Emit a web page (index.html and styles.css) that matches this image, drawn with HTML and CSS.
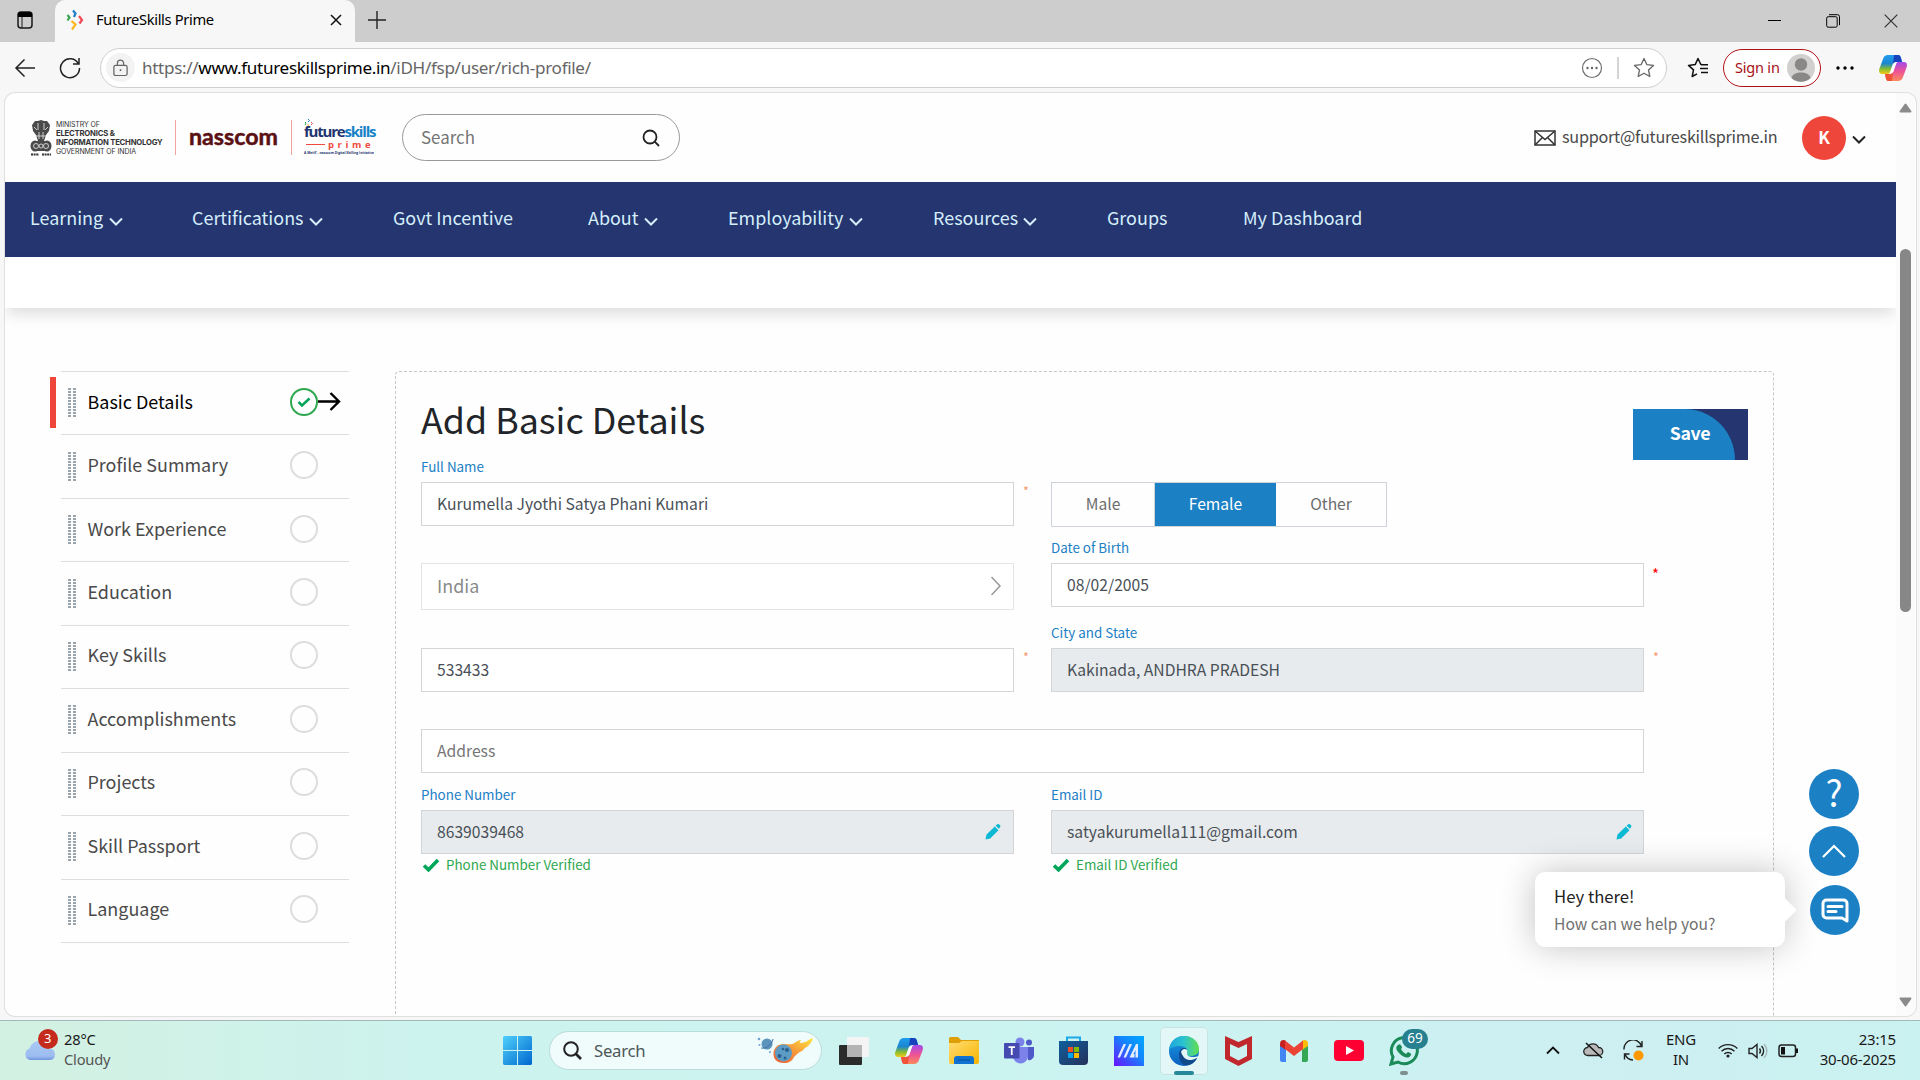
FILE: index.html
```html
<!DOCTYPE html>
<html lang="en">
<head>
<meta charset="utf-8">
<title>FutureSkills Prime</title>
<link rel="stylesheet" href="styles.css">
</head>
<body>
<svg class="defs" width="0" height="0">
  <defs>
    <linearGradient id="cpA" x1="0" y1="0" x2="0" y2="1"><stop offset="0" stop-color="#1f9df0"/><stop offset=".45" stop-color="#1b86cf"/><stop offset=".75" stop-color="#8bbf2b"/><stop offset="1" stop-color="#f4c81c"/></linearGradient>
    <linearGradient id="cpB" x1="0" y1="0" x2="0" y2="1"><stop offset="0" stop-color="#a34bea"/><stop offset=".5" stop-color="#ee5396"/><stop offset="1" stop-color="#fb8a5c"/></linearGradient>
    <linearGradient id="win" x1="0" y1="0" x2="1" y2="1"><stop offset="0" stop-color="#4fd0fb"/><stop offset="1" stop-color="#0067cf"/></linearGradient>
    <linearGradient id="fire" x1="0" y1="1" x2="1" y2="0"><stop offset="0" stop-color="#ee5a2e"/><stop offset=".5" stop-color="#f7983a"/><stop offset="1" stop-color="#fde63c"/></linearGradient>
    <linearGradient id="fold" x1="0" y1="0" x2="1" y2="1"><stop offset="0" stop-color="#ffdd73"/><stop offset="1" stop-color="#f8b400"/></linearGradient>
    <linearGradient id="store" x1="0" y1="0" x2="1" y2="1"><stop offset="0" stop-color="#0f5f9e"/><stop offset="1" stop-color="#25325b"/></linearGradient>
    <linearGradient id="asus" x1="0" y1="1" x2="1" y2="0"><stop offset="0" stop-color="#6a11ff"/><stop offset=".6" stop-color="#1188ff"/><stop offset="1" stop-color="#00a8ff"/></linearGradient>
    <linearGradient id="edA" x1="0" y1="0" x2="1" y2="0"><stop offset="0" stop-color="#1ea6dc"/><stop offset=".5" stop-color="#2cc3cf"/><stop offset="1" stop-color="#62e04d"/></linearGradient>
    <linearGradient id="edB" x1="0" y1="0" x2="0" y2="1"><stop offset="0" stop-color="#1c9de0"/><stop offset="1" stop-color="#0a5fc0"/></linearGradient>
    <linearGradient id="cloud" x1="0" y1="0" x2="0" y2="1"><stop offset="0" stop-color="#a9c9f5"/><stop offset=".8" stop-color="#9dbcf0"/><stop offset="1" stop-color="#6e95e0"/></linearGradient>
    <symbol id="chev" viewBox="0 0 14 9"><path d="M1 1.500l6 6 6-6" fill="none" stroke="currentColor" stroke-width="2"/></symbol>
    <symbol id="copilot" viewBox="0 0 28 26">
      <path d="M9 0h10c2 0 2.600 1.500 3 3l1 4h-6c-2 0-3 1-3.500 3L11 17c-.5 1.500-1.500 2-3 2H3c-2.500 0-3.500-2-2.700-5L4 4c.8-2.500 2.500-4 5-4z" fill="url(#cpA)"/>
      <path d="M15 0h4c2 0 2.600 1.500 3 3l1 4h-6c-1.500 0-2.500.5-3 2z" fill="#1744bd"/>
      <path d="M19 26H9.500c-2 0-2.300-1.500-2.700-3L6 19h5c2 0 3-1 3.500-3L17 9c.5-1.500 1.500-2 3-2h5c2.500 0 3.500 2 2.700 5L24 22c-.8 2.500-2.500 4-5 4z" fill="url(#cpB)"/>
      <path d="M13 26H9.500c-2 0-2.300-1.500-2.700-3L6 19h5c1.500 0 2.500-.5 3-2z" fill="#ef5338"/>
      <path d="M17.500 8.500h-2c-.8 0-1.300.5-1.600 1.500L11.200 17.500h1.500c1 0 1.500-.5 1.800-1.500l2-6z" fill="#fff"/>
    </symbol>
    <symbol id="tick" viewBox="0 0 18 14"><path d="M2 7.500l4.500 4.300L16 2" fill="none" stroke="#00a65a" stroke-width="3.600"/></symbol>
    <symbol id="pencil" viewBox="0 0 16 16"><path d="M0.500 15.500l1-5L9.800 2.600l3.700 3.700-8.300 8.200zM10.600 1.800l1-1c1-1 2.300-.8 3 0 1 .9 1.100 2 .1 3l-.8.900z" fill="#0cb9d4"/></symbol>
    <symbol id="grip" viewBox="0 0 8 29"><path d="M1.500 0v29M6.500 0v29" stroke="#9aa4ad" stroke-width="3" stroke-dasharray="2 1" fill="none"/></symbol>
  </defs>
</svg>

<div class="tabstrip">
  <div class="workspaces"><svg width="16" height="18" viewBox="0 0 16 18"><rect x="1" y="1" width="14" height="16" rx="3" fill="none" stroke="#1a1a1a" stroke-width="1.500"/><path d="M1 6V4a3 3 0 0 1 3-3h8a3 3 0 0 1 3 3v2z" fill="#000"/><path d="M5 6v11" stroke="#1a1a1a"/></svg></div>
  <div class="tab">
    <svg class="favicon" width="18" height="22" viewBox="0 0 18 22" fill="none" stroke-width="2.200"><path d="M7 1.500l2.500 3L8 8" stroke="#1c7fc6"/><path d="M1.500 6l2 2.500-2 3" stroke="#3aa655"/><path d="M13 7l3 4-2.500 3.500" stroke="#ef4a56"/><path d="M5.500 12l4 3.500-3.500 5" stroke="#fbb71b"/></svg>
    <span class="tab-title">FutureSkills Prime</span>
    <svg class="tab-close" width="12" height="12" viewBox="0 0 12 12"><path d="M1 1l10 10M11 1L1 11" stroke="#111" stroke-width="1.500"/></svg>
  </div>
  <svg class="newtab" width="18" height="18" viewBox="0 0 18 18"><path d="M9 0v18M0 9h18" stroke="#222" stroke-width="1.400"/></svg>
  <div class="winctl">
    <svg width="14" height="14" viewBox="0 0 14 14"><path d="M0 6.500h13" stroke="#000"/></svg>
    <svg width="14" height="14" viewBox="0 0 14 14" fill="none" stroke="#000"><rect x=".7" y="2.700" width="10.500" height="10.500" rx="1.500"/><path d="M3 .7h8.500a2 2 0 0 1 2 2v8.500"/></svg>
    <svg width="14" height="14" viewBox="0 0 14 14"><path d="M.7.7l12.600 12.600M13.300.7L.7 13.300" stroke="#333" stroke-width="1.200"/></svg>
  </div>
</div>

<div class="toolbar">
  <svg class="back" width="22" height="20" viewBox="0 0 22 20" fill="none" stroke="#222" stroke-width="1.500"><path d="M21 10H2M10.500 1.500L2 10l8.500 8.500"/></svg>
  <svg class="reload" width="22" height="22" viewBox="0 0 22 22" fill="none" stroke="#222" stroke-width="1.500"><path d="M19.500 7A9.500 9.500 0 1 0 20.500 11M20 1v6h-6"/></svg>
  <div class="address">
    <span class="lock"><svg width="15" height="18" viewBox="0 0 17 19" fill="none" stroke="#666" stroke-width="1.400"><rect x="1" y="6.500" width="15" height="11.500" rx="2"/><path d="M5 6.500V4a3.500 3.500 0 0 1 7 0v2.500"/><circle cx="8.500" cy="12" r="1" fill="#555" stroke="none"/></svg></span>
    <span class="url">https://<b>www.futureskillsprime.in</b>/iDH/fsp/user/rich-profile/</span>
    <svg class="more-circle" width="22" height="22" viewBox="0 0 22 22"><circle cx="11" cy="11" r="9.500" fill="none" stroke="#707070" stroke-width="1.200"/><g fill="#666"><circle cx="6.500" cy="11" r="1.200"/><circle cx="11" cy="11" r="1.200"/><circle cx="15.500" cy="11" r="1.200"/></g></svg>
    <i class="vsep"></i>
    <svg width="22" height="22" viewBox="0 0 22 22" fill="none" stroke="#666" stroke-width="1.300" stroke-linejoin="round"><path d="M11 1.500l2.800 6.100 6.700.8-5 4.500 1.300 6.600-5.800-3.300-5.800 3.300 1.300-6.600-5-4.500 6.700-.8z"/></svg>
  </div>
  <svg class="favs" width="22" height="22" viewBox="0 0 22 22" fill="none" stroke="#111" stroke-width="1.500" stroke-linejoin="round"><path d="M15 7.700l-1.300-.4L11 1.500 8.200 7.600l-6.700.8 5 4.500-1.300 6.600L10 16.800M13 11.500h8M14 15.500h7M14 7.700h7"/></svg>
  <div class="signin"><span>Sign in</span><svg width="28" height="28" viewBox="0 0 28 28"><circle cx="14" cy="14" r="14" fill="#d2d0ce"/><circle cx="14" cy="10.500" r="6.200" fill="#8a8886"/><path d="M4.500 24c1-4 5-5.500 9.500-5.500s8.500 1.500 9.500 5.500c-5.500 5-13.500 5-19 0z" fill="#8a8886"/></svg></div>
  <svg class="dots" width="18" height="4" viewBox="0 0 18 4"><circle cx="2" cy="2" r="1.700"/><circle cx="9" cy="2" r="1.700"/><circle cx="16" cy="2" r="1.700"/></svg>
  <svg class="cop" width="28" height="26"><use href="#copilot"/></svg>
</div>

<div class="viewport">
  <div class="page">
    <header class="site-head">
      <svg class="emblem" width="22" height="36" viewBox="0 0 22 36"><g fill="#4a4a4a"><path d="M5 1h3l3-1 3 1h3l3 4-1 6-3 4-2 6H8l-2-6-3-4-1-6z"/><ellipse cx="5" cy="26" rx="4.500" ry="5.500"/><ellipse cx="17" cy="26" rx="4.500" ry="5.500"/><rect x="3" y="21" width="16" height="10" rx="2"/></g><g fill="none" stroke="#ddd" stroke-width=".9"><path d="M8 3v7M14 3v7M4 7l3 3M18 7l-3 3M9 12v7M13 12v7M6 16h10"/><circle cx="6" cy="26" r="2.500"/><circle cx="16" cy="26" r="2.500"/><circle cx="11" cy="26" r="2"/></g><path d="M1 34.500h8M12 34.500h9" stroke="#333" stroke-width="2" stroke-dasharray="2 .6"/></svg>
      <div class="ministry"><span>MINISTRY OF</span><b>ELECTRONICS &amp;</b><b>INFORMATION TECHNOLOGY</b><span>GOVERNMENT OF INDIA</span></div>
      <i class="hr1"></i>
      <div class="nasscom">nasscom</div>
      <i class="hr2"></i>
      <div class="fsp">
        <svg width="10" height="8" viewBox="0 0 10 8" fill="none"><path d="M4 0l1.500 1.500L4 3" stroke="#1c7fc6"/><path d="M1 3l1 1-1 2" stroke="#3aa655"/><path d="M7 3l1.500 1.500L7 6" stroke="#ef4a56"/><path d="M3.500 5l1 1-1 2" stroke="#fbb71b"/></svg>
        <div class="fsp-a">future<em>skills</em></div>
        <div class="fsp-b"><i></i>prime</div>
        <div class="fsp-c">A MeitY - nasscom Digital Skilling Initiative</div>
      </div>
      <div class="site-search"><span>Search</span><svg width="18" height="18" viewBox="0 0 18 18" fill="none" stroke="#222" stroke-width="1.800"><circle cx="8" cy="8" r="6.500"/><path d="M12.700 12.700L17 17"/></svg></div>
      <svg class="mail" width="22" height="16" viewBox="0 0 22 16" fill="none" stroke="#333" stroke-width="1.500"><rect x="1" y="1" width="20" height="14"/><path d="M1 1l10 8.500L21 1M1 15l7.500-7.500M21 15l-7.500-7.500"/></svg>
      <span class="support">support@futureskillsprime.in</span>
      <span class="avatar">K</span>
      <svg class="achev" width="14" height="9"><use href="#chev"/></svg>
    </header>
    <nav class="nav">
      <a class="n1">Learning<svg width="14" height="9"><use href="#chev"/></svg></a>
      <a class="n2">Certifications<svg width="14" height="9"><use href="#chev"/></svg></a>
      <a class="n3">Govt Incentive</a>
      <a class="n4">About<svg width="14" height="9"><use href="#chev"/></svg></a>
      <a class="n5">Employability<svg width="14" height="9"><use href="#chev"/></svg></a>
      <a class="n6">Resources<svg width="14" height="9"><use href="#chev"/></svg></a>
      <a class="n7">Groups</a>
      <a class="n8">My Dashboard</a>
    </nav>
    <div class="strip"></div>
    <main class="main">
      <ul class="side">
        <li class="active"><svg class="grip" width="8" height="29"><use href="#grip"/></svg><span>Basic Details</span><svg class="done" width="51" height="28" viewBox="0 0 51 28" fill="none"><circle cx="14" cy="14" r="13" stroke="#2fa84f" stroke-width="2"/><path d="M8.500 14l3.500 3.500 7.500-7" stroke="#00a65a" stroke-width="2.500"/><path d="M28 13.500h20M40.500 5l8.500 8.500-8.500 8.500" stroke="#000" stroke-width="2.400"/></svg></li>
        <li><svg class="grip" width="8" height="29"><use href="#grip"/></svg><span>Profile Summary</span><i></i></li>
        <li><svg class="grip" width="8" height="29"><use href="#grip"/></svg><span>Work Experience</span><i></i></li>
        <li><svg class="grip" width="8" height="29"><use href="#grip"/></svg><span>Education</span><i></i></li>
        <li><svg class="grip" width="8" height="29"><use href="#grip"/></svg><span>Key Skills</span><i></i></li>
        <li><svg class="grip" width="8" height="29"><use href="#grip"/></svg><span>Accomplishments</span><i></i></li>
        <li><svg class="grip" width="8" height="29"><use href="#grip"/></svg><span>Projects</span><i></i></li>
        <li><svg class="grip" width="8" height="29"><use href="#grip"/></svg><span>Skill Passport</span><i></i></li>
        <li><svg class="grip" width="8" height="29"><use href="#grip"/></svg><span>Language</span><i></i></li>
      </ul>
      <section class="panel">
        <div class="panel-head"><h1>Add Basic Details</h1><button class="save"><span>Save</span></button></div>
        <div class="row r1">
          <div class="field"><label>Full Name</label><div class="box">Kurumella Jyothi Satya Phani Kumari</div><sup>*</sup></div>
          <div class="field"><label></label><div class="seg"><span class="male">Male</span><span class="female">Female</span><span class="other">Other</span></div></div>
        </div>
        <div class="row r2">
          <div class="field"><label></label><div class="box country">India<svg width="12" height="20" viewBox="0 0 12 20"><path d="M1.500 1l8.500 9-8.500 9" fill="none" stroke="#999" stroke-width="1.500"/></svg></div></div>
          <div class="field"><label>Date of Birth</label><div class="box">08/02/2005</div><sup class="red">*</sup></div>
        </div>
        <div class="row r3">
          <div class="field"><label></label><div class="box">533433</div><sup>*</sup></div>
          <div class="field"><label>City and State</label><div class="box off">Kakinada, ANDHRA PRADESH</div><sup>*</sup></div>
        </div>
        <div class="row r4"><div class="field wide"><label></label><div class="box ph">Address</div></div></div>
        <div class="row r5">
          <div class="field"><label>Phone Number</label><div class="box off">8639039468<svg width="16" height="16"><use href="#pencil"/></svg></div><div class="ok"><svg width="18" height="14"><use href="#tick"/></svg>Phone Number Verified</div></div>
          <div class="field"><label>Email ID</label><div class="box off mailbox">satyakurumella111@gmail.com<svg width="16" height="16"><use href="#pencil"/></svg></div><div class="ok"><svg width="18" height="14"><use href="#tick"/></svg>Email ID Verified</div></div>
        </div>
      </section>
    </main>
  </div>
  <div class="scroll">
    <svg width="13" height="10" viewBox="0 0 13 10"><path d="M6.500 1.500L11.500 8.500h-10z" fill="#8b8b8b" stroke="#8b8b8b" stroke-width="2" stroke-linejoin="round"/></svg>
    <div class="thumb"></div>
    <svg class="down" width="13" height="10" viewBox="0 0 13 10"><path d="M6.500 8.500L11.500 1.500h-10z" fill="#8b8b8b" stroke="#8b8b8b" stroke-width="2" stroke-linejoin="round"/></svg>
  </div>
  <div class="chat"><strong>Hey there!</strong><span>How can we help you?</span></div>
  <div class="fabs">
    <span class="fab help">?</span>
    <span class="fab"><svg width="24" height="14" viewBox="0 0 24 14"><path d="M1 13L12 2l11 11" fill="none" stroke="#fff" stroke-width="2.200"/></svg></span>
    <span class="fab talk"><svg width="28" height="25" viewBox="0 0 28 25" fill="none" stroke="#fff" stroke-width="3" stroke-linejoin="round" stroke-linecap="round"><path d="M5.500 2h17A3.500 3.500 0 0 1 26 5.500V23l-5-3H5.500A3.500 3.500 0 0 1 2 16.500v-11A3.500 3.500 0 0 1 5.500 2z"/><path d="M7 8.500h14M7 13.500h8"/></svg></span>
  </div>
</div>

<footer class="taskbar">
  <div class="weather">
    <svg width="34" height="36" viewBox="0 0 34 36"><path d="M6 31a6 6 0 0 1-.5-11.500Q8 12 15 12c6 0 8 4 8.500 7.500Q31 19 31 25.500 31 31 25 31z" fill="url(#cloud)"/><circle cx="24" cy="10" r="10" fill="#c42b1c"/></svg>
    <b>3</b>
    <div><span>28°C</span><span class="dim">Cloudy</span></div>
  </div>
  <svg class="start" width="29" height="29" viewBox="0 0 29 29"><path d="M1 0h13v14H0V1zM15 0h13l1 1v13H15zM0 15h14v14H1l-1-1zM15 15h14v13l-1 1H15z" fill="url(#win)"/></svg>
  <div class="tsearch">
    <svg width="19" height="19" viewBox="0 0 19 19" fill="none" stroke="#222" stroke-width="2"><circle cx="8" cy="8" r="6.800"/><path d="M13 13l5 5" stroke-width="2.600"/></svg>
    <span>Search</span>
    <svg class="comet" width="57" height="27" viewBox="0 0 57 27"><circle cx="10" cy="7" r="5.500" fill="#5c93bd"/><path d="M4 11c5 1 11-3 12-9" stroke="#3f76a5" fill="none"/><circle cx="2" cy="2" r="1.300" fill="#6aa5d0"/><circle cx="2.500" cy="8" r="1" fill="#6aa5d0"/><circle cx="13" cy="15" r="1" fill="#6aa5d0"/><path d="M16.500 17c0-6 4-10 10-10 5 0 7 1 10-.5S41 3 44 3c-1 2-2 3 0 3 5 0 8-4 12-5-1 4-4 8-8 10l-3 3c-3 1-5 3-8 6-2 4-5 6-10 6-6 0-10.500-3-10.500-9z" fill="url(#fire)"/><circle cx="26.500" cy="16" r="8.500" fill="#5c9cc4"/><circle cx="30" cy="13" r="2" fill="#2c5f8d"/><circle cx="22.500" cy="19" r="2" fill="#2c5f8d"/><circle cx="28" cy="21" r="1.500" fill="#2c5f8d"/><circle cx="26" cy="12" r="1.300" fill="#2c5f8d"/></svg>
  </div>
  <svg class="a0" width="30" height="28" viewBox="0 0 30 28"><rect y="8" width="23" height="20" rx="1" fill="#2b2b2b"/><rect x="8" y="0" width="22" height="20" rx="1" fill="#f4f4f4"/><rect x="8" y="8" width="15" height="12" fill="#b4b4b4"/></svg>
  <svg class="a1" width="28" height="26"><use href="#copilot"/></svg>
  <svg class="a2" width="30" height="27" viewBox="0 0 30 27"><path d="M0 1.500Q0 0 1.500 0H9l3 3h18v8H0z" fill="#dd9e06"/><path d="M0 6h10l3-2h17v21q0 2-2 2H2q-2 0-2-2z" fill="url(#fold)"/><path d="M5 27v-5q0-3 3-3h14q3 0 3 3v5z" fill="#0f72d0"/><path d="M9 23h12" stroke="#0b4f98"/></svg>
  <svg class="a3" width="30" height="27" viewBox="0 0 30 27"><circle cx="16" cy="5" r="4.500" fill="#7b83eb"/><circle cx="25" cy="5.500" r="3" fill="#5059c9"/><path d="M22 10h8v9a5 5 0 0 1-6 4z" fill="#5059c9"/><path d="M9 10h15v9a7.500 7.500 0 0 1-15 0z" fill="#7b83eb"/><rect y="6" width="15.500" height="15.500" rx="1" fill="#444ab0"/><path d="M4.500 10.200h6.500M7.750 10v8" stroke="#fff" stroke-width="1.800"/></svg>
  <svg class="a4" width="29" height="30" viewBox="0 0 29 30"><path d="M8 7V1.500h13V7" fill="none" stroke="#1ba9e8" stroke-width="2"/><path d="M0 5h29v20q0 4-4 4H4q-4 0-4-4z" fill="url(#store)"/><path d="M9 11h5v5H9z" fill="#f25022"/><path d="M15 11h5v5h-5z" fill="#7fba00"/><path d="M9 17h5v5H9z" fill="#00a4ef"/><path d="M15 17h5v5h-5z" fill="#ffb900"/></svg>
  <svg class="a5" width="30" height="30" viewBox="0 0 30 30"><path d="M0 0h30v30H0z" fill="url(#asus)"/><g fill="#e4edff"><path d="M3.500 21.500L9.500 8h2.500l-6 13.500z"/><path d="M9.500 21.500l6-13.500H18l-6 13.500z"/><path d="M15.500 21.500L22 8h2v13.500h-2.500V14l-2 4h1v3.500z"/></g></svg>
  <div class="edge"><svg width="30" height="30" viewBox="0 0 30 30"><circle cx="15" cy="15" r="15" fill="url(#edB)"/><path d="M0 14C1 5 7 0 15 0c9 0 15 6 15 13 0 5-4 7-8 7-3 0-5-1-4-3 1-5-3-7-7-7C6 10 1 12 0 14z" fill="url(#edA)"/><path d="M10 19c0-4 2-7 5-7 2 0 4 2 3 5-1 4 2 6 6 6 2 0 3-1 4-1-3 6-8 8-12 7-4-1-6-5-6-10z" fill="#114a8b"/><path d="M12 16c1-3 4-4 6-2 1 1 0 3 0 4 1 3 5 4 12 2v2h-2c-4 2-8 3-11 1-2-1-4-4-5-7z" fill="#e4f7f7"/></svg></div>
  <svg class="a6" width="27" height="30" viewBox="0 0 27 30"><path d="M0 0l13.500 6L27 0v23l-13.500 7L0 23zM5 8v12l8.500 4.500L22 20V8l-8.500 4z" fill="#c0282d" fill-rule="evenodd"/></svg>
  <svg class="a7" width="28" height="22" viewBox="0 0 28 22"><path d="M0 3v17q0 2 2 2h4V8z" fill="#4285f4"/><path d="M28 3v17q0 2-2 2h-4V8z" fill="#34a853"/><path d="M0 4Q0 0 3.500 0 5 0 6 1v9L0 6z" fill="#c5221f"/><path d="M28 4q0-4-3.500-4Q23 0 22 1v9l6-4z" fill="#fbbc04"/><path d="M5 .5l9 7 9-7V9l-9 7-9-7z" fill="#ea4335"/></svg>
  <svg class="a8" width="30" height="21" viewBox="0 0 30 21"><rect width="30" height="21" rx="4" fill="#ff0033"/><path d="M12 6l8 4.500-8 4.500z" fill="#fff"/></svg>
  <div class="wa"><svg width="30" height="30" viewBox="0 0 30 30" fill="none"><path d="M2 28l2-7a13 13 0 1 1 5 5z" stroke="#1a8a58" stroke-width="3"/><path d="M9 9c2-2 3 0 4 2 0 1-1 2-1 2 1 2 3 4 5 5l2-2c2 1 4 2 3 3-2 4-7 3-11-1s-5-7-2-9z" fill="#1a8a58"/></svg><b>69</b></div>
  <svg class="up" width="14" height="9" viewBox="0 0 14 9"><path d="M1 7.500l6-6 6 6" fill="none" stroke="#111" stroke-width="1.800"/></svg>
  <svg class="onedrive" width="21" height="17" viewBox="0 0 21 17"><path d="M5 13.500a4 4 0 0 1-.5-8 6 6 0 0 1 11 0 4 4 0 0 1 .5 8z" fill="#b9b9b9" stroke="#222" stroke-width="1.300"/><path d="M3 1l16 15" stroke="#111" stroke-width="1.500"/></svg>
  <svg class="sync" width="21" height="21" viewBox="0 0 21 21" fill="none" stroke="#222" stroke-width="1.400"><path d="M1 9.500A9 9 0 0 1 18.500 6M19 1v5.500h-5.500M1.500 19.500V14h5M2 14a9 9 0 0 0 8 6"/><circle cx="15.500" cy="15.500" r="5" fill="#ff9800" stroke="none"/></svg>
  <div class="lang"><span>ENG</span><span>IN</span></div>
  <svg class="wifi" width="20" height="15" viewBox="0 0 20 15" fill="none" stroke="#222" stroke-width="1.400"><path d="M.7 5.500a13 13 0 0 1 18.600 0M3.500 8.300a9 9 0 0 1 13 0M6.300 11a5.200 5.200 0 0 1 7.400 0"/><circle cx="10" cy="13" r="1.600" fill="#222" stroke="none"/></svg>
  <svg class="vol" width="20" height="16" viewBox="0 0 20 16" fill="none" stroke="#222" stroke-width="1.400"><path d="M1 5.500h3L9 1.500v13l-5-4H1zM11.500 5.500a4 4 0 0 1 0 5M13.500 3a7 7 0 0 1 0 10"/><path d="M16 1a10 10 0 0 1 0 14" stroke="#a5b5b5"/></svg>
  <svg class="bat" width="21" height="14" viewBox="0 0 21 14"><rect x="1" y="1" width="16.500" height="11.500" rx="2.500" fill="none" stroke="#222" stroke-width="1.500"/><rect x="3" y="3" width="4" height="7.500" fill="#111"/><path d="M19 4.500v4.500" stroke="#111" stroke-width="2"/></svg>
  <div class="clock"><span>23:15</span><span class="date">30-06-2025</span></div>
</footer>
</body>
</html>
```
FILE: styles.css
```css
* { box-sizing: border-box; }
body {
  margin: 0; width: 1920px; height: 1080px; overflow: hidden;
  display: flex; flex-direction: column;
  background: #f7f7f7; color: #4a4a4a;
  font-family: "Noto Sans CJK SC", "Noto Sans", sans-serif;
}
svg { display: block; flex: none; }
.defs { position: absolute; }
i, em { font-style: normal; }
span, b, a, label { white-space: nowrap; }

/* browser chrome */
.tabstrip, .toolbar, .taskbar { font-family: "Noto Sans", sans-serif; display: flex; align-items: center; flex: none; }
.tabstrip { height: 42px; background: #cdcdcd; }
.workspaces { width: 55px; height: 42px; padding: 11px 0 0 17px; }
.tab { width: 300px; height: 42px; background: #f7f7f7; border-radius: 10px 10px 0 0; display: flex; align-items: center; padding: 0 0 3px 11px; }
.tab-title { font-size: 14.700px; letter-spacing: -.35px; color: #000; margin: -1px 0 0 12px; width: 234px; }
.tab-close { margin-top: 1px; }
.newtab { margin: -3px 0 0 13px; }
.winctl { margin-left: auto; display: flex; gap: 44px; padding-right: 22px; }
.toolbar { height: 51px; }
.back { margin-left: 14px; }
.reload { margin-left: 23px; }
.address { margin-left: 19px; width: 1567px; height: 40px; border: 1px solid #cfcfcf; border-radius: 20px; background: #fff; display: flex; align-items: center; padding: 0 11px 0 5px; }
.lock { width: 29px; height: 29px; border-radius: 50%; background: #f3f3f3; display: flex; align-items: center; justify-content: center; }
.url { margin: -1px 0 0 7px; font-size: 17.100px; letter-spacing: -.32px; color: #666; }
.url b { font-weight: 400; color: #000; }
.more-circle { margin-left: auto; }
.vsep { width: 2px; height: 22px; background: #d4d4d4; margin: 0 14px; }
.favs { margin-left: 20px; }
.signin { margin-left: 14px; width: 98px; height: 38px; border: 1.500px solid #b01218; border-radius: 19px; background: #fff; display: flex; align-items: center; justify-content: space-between; padding: 0 5px 0 11px; color: #a80f14; font-size: 14.500px; letter-spacing: -.2px; }
.signin span { margin-top: -2px; }
.dots { margin-left: 15px; }
.cop { margin-left: 25px; }

/* page frame */
.viewport { position: relative; margin-left: 5px; width: 1911px; height: 923px; display: flex; background: #fefefe; border-radius: 10px; overflow: hidden; box-shadow: 0 0 0 1px #e0e0e0; flex: none; }
.page { width: 1891px; height: 923px; }
.scroll { width: 19px; background: #fbfbfb; display: flex; flex-direction: column; align-items: center; padding-top: 10px; }
.thumb { width: 11px; height: 363px; margin-top: 136px; background: #878787; border-radius: 6px; }
.down { margin-top: 385px; }

/* site header */
.site-head { height: 89px; display: flex; align-items: center; padding-left: 25px; }
.ministry { margin-left: 4px; width: 108px; display: flex; flex-direction: column; font: 7px/9px Inter, sans-serif; color: #333; letter-spacing: -.1px; }
.ministry b { font-size: 7.700px; letter-spacing: -.2px; }
.hr1, .hr2 { width: 1px; height: 35px; background: #f3a59e; }
.hr1 { margin-left: 11px; }
.nasscom { margin: -3px 0 0 13px; width: 102px; font: 700 23.200px/30px Lato, sans-serif; -webkit-text-stroke: .5px #5a1114; color: #5a1114; }
.fsp { margin-left: 12px; width: 73px; height: 37px; }
.fsp-a { height: 15px; margin-top: -2px; font: 700 15px/13px "Open Sans", sans-serif; letter-spacing: -1.200px; color: #22346f; white-space: nowrap; }
.fsp-a em { color: #1782c6; }
.fsp-b { display: flex; align-items: center; font: 700 9.500px/9px "Open Sans", sans-serif; letter-spacing: 3.600px; color: #ef4a40; }
.fsp-b i { width: 19px; height: 1px; background: #ef4a40; margin: 0 3px 0 2px; }
.fsp-c { font: 700 3.300px/7px "Open Sans", sans-serif; color: #22346f; white-space: nowrap; }
.site-search { margin-left: 25px; width: 278px; height: 47px; border: 1px solid #999; border-radius: 24px; display: flex; align-items: center; justify-content: space-between; padding: 0 19px 0 18px; font-size: 16.900px; line-height: 24px; color: #757575; }
.site-search span { margin-top: -2px; }
.mail { margin-left: 854px; margin-top: 1px; }
.support { margin-left: 6px; width: 216px; font-size: 16.200px; letter-spacing: -.25px; line-height: 24px; color: #4a4a4a; margin-top: -3px; }
.avatar { margin: 0 0 0 24px; width: 44px; height: 44px; border-radius: 50%; background: #ef463b; color: #fff; font-weight: 700; font-size: 17px; line-height: 41px; text-align: center; }
.achev { margin-left: 6px; margin-top: 4px; color: #222; }
.nav { height: 75px; background: #24356f; display: flex; align-items: center; padding-left: 25px; color: #d5eefb; font-size: 17.950px; line-height: 26px; }
.nav a { display: flex; align-items: center; margin-top: -5px; }
.nav a svg { margin: 9px 0 0 auto; }
.n1 { width: 93px; margin-right: 69px; } .n2 { width: 131px; margin-right: 70px; }
.n3 { width: 195px; } .n4 { width: 70px; margin-right: 70px; }
.n5 { width: 135px; margin-right: 70px; } .n6 { width: 104px; margin-right: 70px; }
.n7 { width: 136px; }
.strip { height: 51px; background: #fff; box-shadow: 0 8px 14px -2px rgba(0,0,0,.13); }

/* profile sections */
.main { display: flex; padding: 63px 0 0 56px; height: 708px; overflow: hidden; }
.side { list-style: none; margin: 0; padding: 0; width: 288px; border-top: 1px solid #dedede; height: 572px; }
.side li { position: relative; height: 63.450px; border-bottom: 1px solid #dedede; display: flex; align-items: center; padding: 0 31px 0 7px; font-size: 17.950px; line-height: 26px; color: #4a4a4a; }
.side li span { margin: -5px auto 0 11.500px; }
.side li i { width: 28px; height: 28px; border: 2px solid #ddd; border-radius: 50%; margin-top: -3px; }
.grip { margin-top: -1px; }
.side .active { color: #000; padding-right: 8px; }
.active::before { content: ""; position: absolute; left: -11px; top: 5px; width: 6px; height: 51px; background: #ef463b; }
.done { margin-top: -3px; }

/* form */
.panel { margin-left: 46px; width: 1379px; height: 700px; border: 1px dashed #c6c6c6; border-radius: 4px 4px 0 0; padding-left: 25px; }
.panel-head { display: flex; justify-content: space-between; height: 84px; padding-right: 25px; }
.panel h1 { margin: 20px 0 0; font-weight: 400; font-size: 35.800px; line-height: 52px; color: #212529; white-space: nowrap; }
.save { margin-top: 37px; width: 115px; height: 51px; border: 0; padding: 0; background: #24356f; font: inherit; }
.save span { display: block; width: 102px; height: 51px; background: #1c80c5; border-top-right-radius: 50px 51px; color: #fff; font-size: 17.800px; letter-spacing: -.4px; font-weight: 700; line-height: 46px; text-align: center; padding-left: 12px; }
.row { display: flex; gap: 37px; height: 81px; }
.r2 { height: 85px; }
.field { position: relative; width: 593px; }
.wide { width: 1223px; }
.field label { display: block; height: 26px; font-size: 13.400px; line-height: 21px; color: #1c80c5; }
.box { height: 44px; border: 1px solid #d3d5d7; background: #fff; display: flex; align-items: center; justify-content: space-between; padding: 0 12px 0 15px; font-size: 15.700px; line-height: 40px; color: #495057; }
.mailbox { padding-right: 11px; }
.off { background: #e8ebed; }
.ph { color: #757575; }
.country { height: 47px; border-color: #e4e4e4; color: #8a8a8a; font-size: 17.900px; padding-right: 11px; padding-bottom: 3px; }
.country svg { margin-top: 2px; }
.field sup { position: absolute; left: 602px; top: 27px; font-size: 12.500px; line-height: 16px; color: #f79468; }
.field .red { color: #f00; font-size: 15px; left: 601px; top: 29px; }
.seg { display: flex; width: 336px; height: 45px; border: 1px solid #ced4da; font-size: 15.650px; line-height: 41px; text-align: center; color: #6c6c6c; }
.male { width: 103px; border-right: 1px solid #ced4da; }
.female { width: 121px; background: #1c80c5; color: #fff; }
.other { flex: 1; }
.ok { display: flex; align-items: center; gap: 6px; padding-left: 1px; font-size: 13.400px; line-height: 20px; color: #2fa84f; }
.ok svg { margin-top: 1px; }

/* floating help */
.chat { position: absolute; left: 1530px; top: 779px; width: 250px; height: 75px; background: #fff; border-radius: 10px; box-shadow: 0 0 34px rgba(0,0,0,.24); padding: 10px 0 0 19px; display: flex; flex-direction: column; }
.chat::after { content: ""; position: absolute; right: -8px; top: 29px; width: 18px; height: 18px; background: #fff; transform: rotate(45deg); }
.chat strong { font-weight: 400; font-size: 16.700px; line-height: 28px; color: #222; }
.chat span { font-size: 15.650px; line-height: 28px; color: #707070; }
.fabs { position: absolute; left: 1804px; top: 676px; display: flex; flex-direction: column; }
.fab { width: 50px; height: 50px; border-radius: 50%; background: #1c80c5; display: flex; align-items: center; justify-content: center; margin-bottom: 7px; }
.help { color: #fff; font-size: 36px; line-height: 44px; padding-bottom: 7px; }
.talk { margin: 2px 0 0 1px; }

/* taskbar */
.taskbar { margin-top: 4px; height: 60px; border-top: 1px solid #a3b8b8; background: linear-gradient(90deg, #d3f1e2 0, #cdf3ee 22%, #cbf3f1 60%, #cdeff2 85%, #caf2f0 100%); color: #1a1a1a; }
.weather { position: relative; display: flex; width: 478px; margin: -3px 0 0 25px; align-items: center; font-size: 14.700px; line-height: 20px; letter-spacing: -.2px; }
.weather svg { margin: -5px 1px 0 -1px; }
.weather b { position: absolute; left: 19px; top: -2px; color: #fff; font-size: 13px; font-weight: 400; }
.weather div { display: flex; flex-direction: column; margin: -1px 0 0 5px; }
.weather .dim { color: #555; }
.tsearch { margin-left: 17px; width: 273px; height: 39px; border: 1px solid #b9dcdc; border-radius: 20px; background: #f0fbfb; display: flex; align-items: center; padding: 0 7px 0 13px; font-size: 16.700px; letter-spacing: -.25px; color: #4b5757; }
.tsearch span { margin-left: 12px; }
.comet { margin-left: auto; }
.a0 { margin-left: 17px; } .a1 { margin-left: 26px; } .a2 { margin-left: 26px; }
.a3, .a4 { margin-left: 25px; }
.a5 { margin-left: 26px; }
.edge { position: relative; margin-left: 16px; width: 48px; height: 48px; border-radius: 5px; background: #e4f7f7; box-shadow: 0 0 0 1px #c5e4e4 inset; padding: 9px; }
.edge::after, .wa::after { content: ""; position: absolute; left: 14px; bottom: 0; width: 20px; height: 4px; border-radius: 2px; background: #26879a; }
.a6 { margin-left: 17px; } .a7 { margin-left: 28px; } .a8 { margin-left: 26px; }
.wa { position: relative; margin-left: 25px; width: 30px; height: 48px; padding-top: 9px; }
.wa::after { left: 11px; width: 8px; background: #7d8f8f; }
.wa b { position: absolute; left: 13px; top: 2px; width: 26px; height: 20px; border-radius: 10px; background: #26808f; color: #fff; font-size: 13.500px; font-weight: 400; line-height: 19px; text-align: center; }
.up { margin-left: 127px; } .onedrive { margin-left: 23px; } .sync { margin-left: 19px; }
.lang, .clock { display: flex; flex-direction: column; margin-top: -3px; font-size: 15px; line-height: 20.500px; letter-spacing: -.2px; }
.lang { width: 40px; margin-left: 17px; align-items: center; }
.wifi { margin-left: 17px; } .vol { margin-left: 10px; } .bat { margin-left: 10px; }
.clock { align-items: flex-end; margin-left: auto; padding-right: 24px; }
```
